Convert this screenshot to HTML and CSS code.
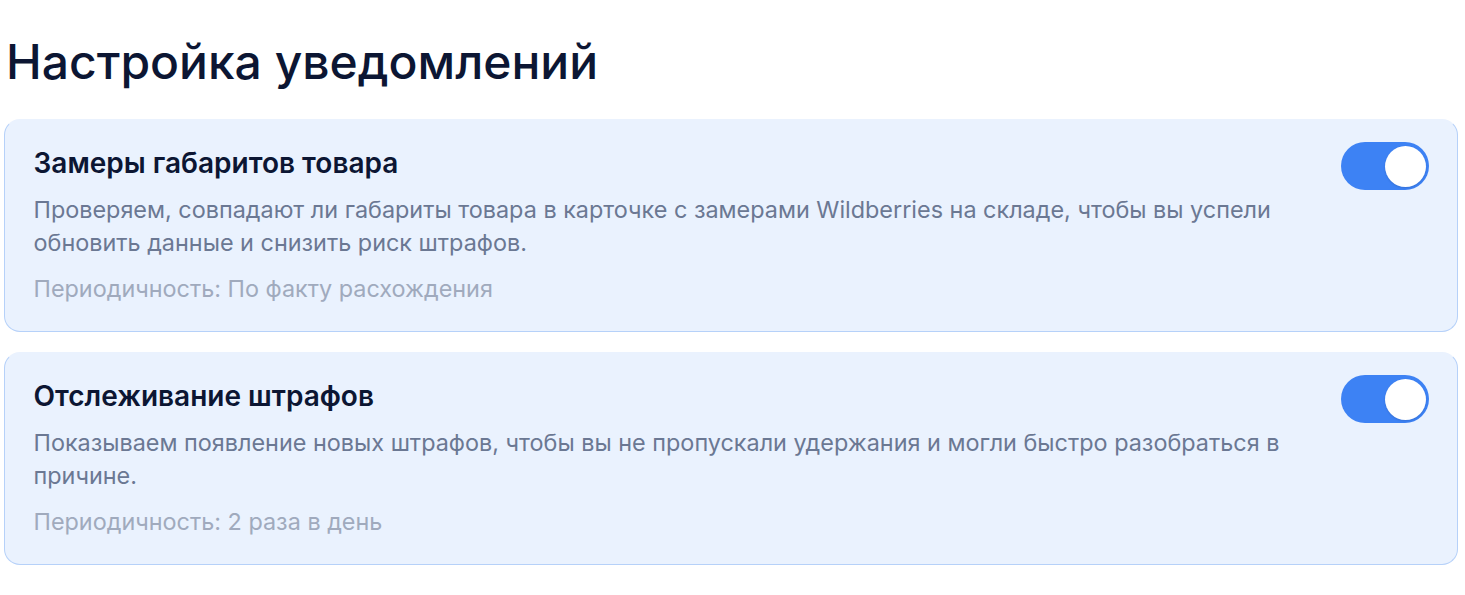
FILE: index.html
```html
<!DOCTYPE html>
<html lang="ru">
<head>
<meta charset="utf-8">
<title>Настройка уведомлений</title>
<link rel="stylesheet" href="styles.css">
</head>
<body>
<main class="page">
  <h1 class="page-title">Настройка уведомлений</h1>
  <section class="list">
    <article class="card">
      <div class="card-body">
        <h2 class="card-title">Замеры габаритов товара</h2>
        <p class="card-desc">Проверяем, совпадают ли габариты товара в карточке с замерами Wildberries на складе, чтобы вы успели обновить данные и снизить риск штрафов.</p>
        <p class="card-period">Периодичность: По факту расхождения</p>
      </div>
      <button class="toggle is-on" type="button" role="switch" aria-checked="true"><span class="toggle-knob"></span></button>
    </article>
    <article class="card">
      <div class="card-body">
        <h2 class="card-title">Отслеживание штрафов</h2>
        <p class="card-desc">Показываем появление новых штрафов, чтобы вы не пропускали удержания и могли быстро разобраться в причине.</p>
        <p class="card-period">Периодичность: 2 раза в день</p>
      </div>
      <button class="toggle is-on" type="button" role="switch" aria-checked="true"><span class="toggle-knob"></span></button>
    </article>
  </section>
</main>
</body>
</html>
```

FILE: styles.css
```css
* {
  box-sizing: border-box;
}

html, body {
  margin: 0;
  background: #ffffff;
}

body {
  font-family: Inter, "Noto Sans", "Liberation Sans", sans-serif;
  color: #0c1633;
}

.page {
  padding: 30px 7px 0 4px;
}

.page-title {
  margin: 0 0 25px 2px;
  font-size: 48px;
  line-height: 64px;
  font-weight: 500;
  color: #0c1633;
}

.list {
  display: flex;
  flex-direction: column;
  gap: 20px;
}

.card {
  display: flex;
  align-items: flex-start;
  gap: 24px;
  padding: 23.5px 28px 26px 28.5px;
  background: #eaf2fe;
  border: 1.5px solid #b6d1f9;
  border-top-color: transparent;
  border-radius: 16px;
}

.card-body {
  flex: 1;
  min-width: 0;
}

.card-title {
  margin: 0;
  font-size: 28px;
  line-height: 38px;
  font-weight: 600;
  color: #0c1633;
}

.card-desc {
  margin: 11.5px 0 0;
  font-size: 23.4px;
  line-height: 33px;
  color: #6b7893;
}

.card-period {
  margin: 13px 0 0;
  font-size: 23.4px;
  line-height: 33px;
  color: #a0aabd;
}

.toggle {
  flex: none;
  position: relative;
  width: 88px;
  height: 48px;
  margin-top: -2px;
  padding: 0;
  border: none;
  border-radius: 24px;
  background: #3d82f4;
  cursor: pointer;
}

.toggle-knob {
  position: absolute;
  top: 4px;
  right: 3px;
  width: 41px;
  height: 41px;
  border-radius: 50%;
  background: #ffffff;
  box-shadow: 0 1px 2px rgba(15, 40, 90, 0.18);
}
```
